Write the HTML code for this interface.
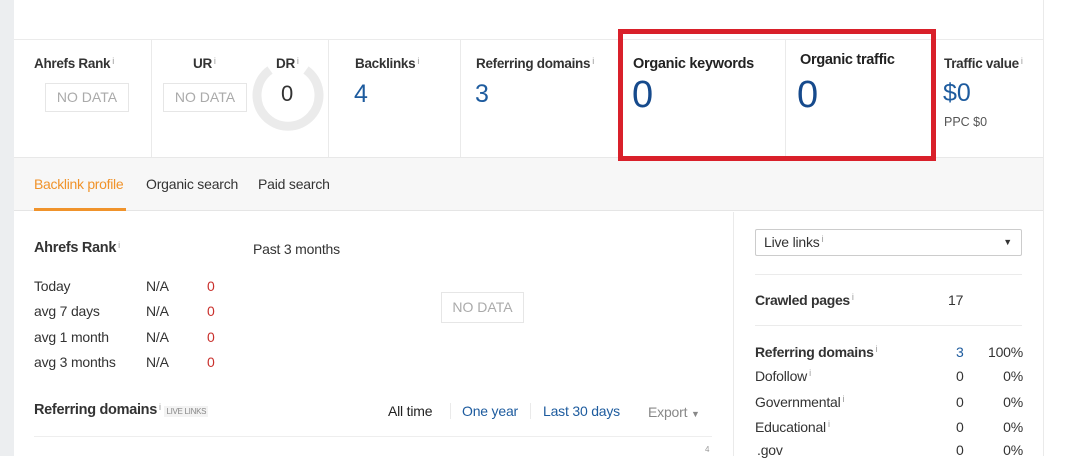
<!DOCTYPE html>
<html><head><meta charset="utf-8"><style>
*{margin:0;padding:0;box-sizing:border-box}
body{width:1071px;height:456px;overflow:hidden;background:#fff;font-family:"Liberation Sans",Arial,sans-serif;color:#333;position:relative}
.a{position:absolute;white-space:nowrap}
.lbl{font-size:13.5px;font-weight:bold;color:#333;letter-spacing:-0.3px}
.i{font-size:9px;color:#999;vertical-align:top;font-weight:normal;margin-left:2px}
.big{font-size:25px;color:#1d5b9e}
.nd{border:1px solid #e6e6e6;color:#aaa;font-size:14px;text-align:center;line-height:27px;height:29px}
.s{font-size:14px;color:#333;letter-spacing:-0.2px}
.r{color:#c9302c}
.vl{position:absolute;width:1px;background:#eaeaea}
.hl{position:absolute;height:1px;background:#ebebeb}
</style></head><body>
<div class="a" style="left:0;top:0;width:14px;height:456px;background:#eceef0"></div>
<div class="vl" style="left:1043px;top:0;height:456px"></div>
<!-- metrics row -->
<div class="hl" style="left:14px;top:39px;width:1029px"></div>
<div class="a" style="left:14px;top:157px;width:1029px;height:54px;background:#f7f7f7;border-top:1px solid #e8e8e8;border-bottom:1px solid #e5e5e5"></div>
<div class="vl" style="left:151px;top:40px;height:117px"></div>
<div class="vl" style="left:328px;top:40px;height:117px"></div>
<div class="vl" style="left:460px;top:40px;height:117px"></div>
<div class="vl" style="left:785px;top:40px;height:117px"></div>

<div class="a lbl" style="left:34px;top:56px">Ahrefs Rank<span class="i">i</span></div>
<div class="a nd" style="left:45px;top:83px;width:84px">NO DATA</div>
<div class="a lbl" style="left:193px;top:56px">UR<span class="i">i</span></div>
<div class="a nd" style="left:163px;top:83px;width:84px">NO DATA</div>
<svg class="a" style="left:250px;top:60px" width="76" height="76" viewBox="0 0 76 76"><path d="M20 10 A31 31 0 1 0 56 10" fill="none" stroke="#ebebeb" stroke-width="9"/></svg>
<div class="a lbl" style="left:276px;top:56px">DR<span class="i">i</span></div>
<div class="a" style="left:281px;top:81px;font-size:22px;color:#333">0</div>
<div class="a lbl" style="left:355px;top:56px">Backlinks<span class="i">i</span></div>
<div class="a big" style="left:354px;top:80px">4</div>
<div class="a lbl" style="left:476px;top:56px">Referring domains<span class="i">i</span></div>
<div class="a big" style="left:475px;top:80px">3</div>
<div class="a lbl" style="left:633px;top:56px;font-size:14.5px;color:#222">Organic keywords</div>
<div class="a" style="left:632px;top:74px;font-size:38px;color:#164a8c">0</div>
<div class="a lbl" style="left:800px;top:52px;font-size:14.5px;color:#222">Organic traffic</div>
<div class="a" style="left:797px;top:74px;font-size:38px;color:#164a8c">0</div>
<div class="a lbl" style="left:944px;top:56px">Traffic value<span class="i">i</span></div>
<div class="a big" style="left:943px;top:79px">$0</div>
<div class="a" style="left:944px;top:115px;font-size:12.5px;color:#555">PPC $0</div>
<div class="a" style="left:618px;top:29px;width:318px;height:132px;border:5px solid #d9202a"></div>

<!-- tabs -->
<div class="a" style="left:34px;top:176px;font-size:14px;color:#f0932b;letter-spacing:-0.3px">Backlink profile</div>
<div class="a" style="left:34px;top:208px;width:92px;height:3px;background:#f0932b"></div>
<div class="a s" style="left:146px;top:176px">Organic search</div>
<div class="a s" style="left:258px;top:176px">Paid search</div>

<!-- left panel -->
<div class="vl" style="left:733px;top:212px;height:244px"></div>
<div class="a lbl" style="left:34px;top:240px;font-size:14.5px">Ahrefs Rank<span class="i">i</span></div>
<div class="a s" style="left:253px;top:241px">Past 3 months</div>
<div class="a s" style="left:34px;top:278px">Today</div>
<div class="a s" style="left:34px;top:303px">avg 7 days</div>
<div class="a s" style="left:34px;top:329px">avg 1 month</div>
<div class="a s" style="left:34px;top:354px">avg 3 months</div>
<div class="a s" style="left:146px;top:278px">N/A</div>
<div class="a s" style="left:146px;top:303px">N/A</div>
<div class="a s" style="left:146px;top:329px">N/A</div>
<div class="a s" style="left:146px;top:354px">N/A</div>
<div class="a s r" style="left:207px;top:278px">0</div>
<div class="a s r" style="left:207px;top:303px">0</div>
<div class="a s r" style="left:207px;top:329px">0</div>
<div class="a s r" style="left:207px;top:354px">0</div>
<div class="a nd" style="left:441px;top:292px;width:83px;height:31px;line-height:29px">NO DATA</div>
<div class="a lbl" style="left:34px;top:402px;font-size:14.5px">Referring domains<span class="i">i</span> <span style="font-size:8px;color:#888;font-weight:normal;background:#f3f3f3;padding:1px 2px">LIVE LINKS</span></div>
<div class="a s" style="left:388px;top:403px;color:#222">All time</div>
<div class="vl" style="left:450px;top:403px;height:16px"></div>
<div class="a s" style="left:462px;top:403px;color:#1d5b9e">One year</div>
<div class="vl" style="left:530px;top:403px;height:16px"></div>
<div class="a s" style="left:543px;top:403px;color:#1d5b9e">Last 30 days</div>
<div class="a s" style="left:648px;top:404px;color:#888">Export <span style="font-size:9px">▼</span></div>
<div class="hl" style="left:34px;top:436px;width:678px;background:#eee"></div>
<div class="a" style="left:705px;top:445px;font-size:8px;color:#999">4</div>

<!-- right panel -->
<div class="a" style="left:755px;top:229px;width:267px;height:27px;border:1px solid #ccc;border-radius:2px;font-size:14px;padding:4px 8px;letter-spacing:-0.2px">Live links<span class="i">i</span><span style="position:absolute;right:9px;top:7px;font-size:9px">▼</span></div>
<div class="hl" style="left:755px;top:274px;width:267px"></div>
<div class="a lbl" style="left:755px;top:292px;font-size:14px">Crawled pages<span class="i">i</span></div>
<div class="a s" style="left:948px;top:292px">17</div>
<div class="hl" style="left:755px;top:325px;width:267px"></div>
<div class="a lbl" style="left:755px;top:344px;font-size:14px">Referring domains<span class="i">i</span></div>
<div class="a s" style="left:956px;top:344px;color:#1d5b9e">3</div>
<div class="a s" style="left:983px;top:344px;width:40px;text-align:right">100%</div>
<div class="a s" style="left:755px;top:368px">Dofollow<span class="i">i</span></div>
<div class="a s" style="left:755px;top:394px">Governmental<span class="i">i</span></div>
<div class="a s" style="left:755px;top:419px">Educational<span class="i">i</span></div>
<div class="a s" style="left:757px;top:442px">.gov</div>
<div class="a s" style="left:956px;top:368px">0</div>
<div class="a s" style="left:956px;top:394px">0</div>
<div class="a s" style="left:956px;top:419px">0</div>
<div class="a s" style="left:956px;top:442px">0</div>
<div class="a s" style="left:983px;top:368px;width:40px;text-align:right">0%</div>
<div class="a s" style="left:983px;top:394px;width:40px;text-align:right">0%</div>
<div class="a s" style="left:983px;top:419px;width:40px;text-align:right">0%</div>
<div class="a s" style="left:983px;top:442px;width:40px;text-align:right">0%</div>
</body></html>
